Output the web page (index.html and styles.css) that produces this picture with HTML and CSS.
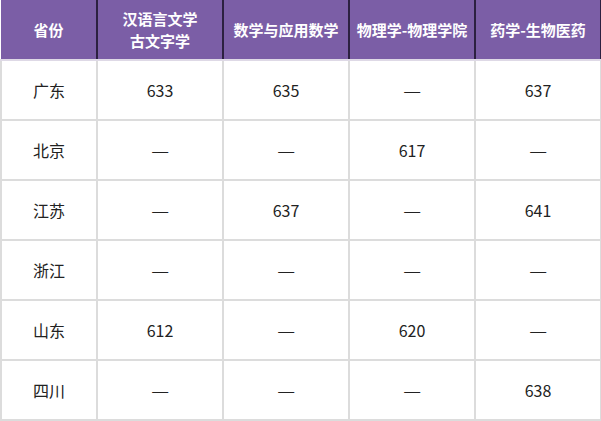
FILE: index.html
```html
<!DOCTYPE html>
<html lang="zh">
<head>
<meta charset="utf-8">
<link rel="stylesheet" href="styles.css">
</head>
<body>
<table class="score-table">
  <colgroup>
    <col class="col-prov">
    <col class="col-major">
    <col class="col-major">
    <col class="col-major">
    <col class="col-major">
  </colgroup>
  <thead>
    <tr>
      <th>省份</th>
      <th>汉语言文学<br>古文字学</th>
      <th>数学与应用数学</th>
      <th>物理学-物理学院</th>
      <th>药学-生物医药</th>
    </tr>
  </thead>
  <tbody>
    <tr><td>广东</td><td>633</td><td>635</td><td><span class="dash">—</span></td><td>637</td></tr>
    <tr><td>北京</td><td><span class="dash">—</span></td><td><span class="dash">—</span></td><td>617</td><td><span class="dash">—</span></td></tr>
    <tr><td>江苏</td><td><span class="dash">—</span></td><td>637</td><td><span class="dash">—</span></td><td>641</td></tr>
    <tr><td>浙江</td><td><span class="dash">—</span></td><td><span class="dash">—</span></td><td><span class="dash">—</span></td><td><span class="dash">—</span></td></tr>
    <tr><td>山东</td><td>612</td><td><span class="dash">—</span></td><td>620</td><td><span class="dash">—</span></td></tr>
    <tr><td>四川</td><td><span class="dash">—</span></td><td><span class="dash">—</span></td><td><span class="dash">—</span></td><td>638</td></tr>
  </tbody>
</table>
</body>
</html>
```
FILE: styles.css
```css
html, body {
  margin: 0;
  padding: 0;
  background: #ffffff;
}

.score-table {
  border-collapse: collapse;
  table-layout: fixed;
  width: 600px;
  font-family: "Noto Sans CJK SC", "Noto Sans", sans-serif;
}

.col-prov { width: 96px; }
.col-major { width: 126px; }

.score-table th {
  height: 59px;
  padding: 0;
  background: #7b5ea6;
  color: #ffffff;
  font-size: 15px;
  font-weight: 700;
  line-height: 22px;
  text-align: center;
  vertical-align: middle;
  border-left: 2px solid #2c2040;
  border-right: 2px solid #2c2040;
  border-bottom: 2px solid #ded9e6;
}

.score-table th:first-child {
  border-left: 0;
}

.score-table td {
  height: 58px;
  padding: 0;
  color: #222222;
  font-size: 16px;
  font-weight: 400;
  text-align: center;
  vertical-align: middle;
  border: 2px solid #dcdcdc;
}

.dash {
  display: inline-block;
  transform: scaleX(1.25);
}
```
